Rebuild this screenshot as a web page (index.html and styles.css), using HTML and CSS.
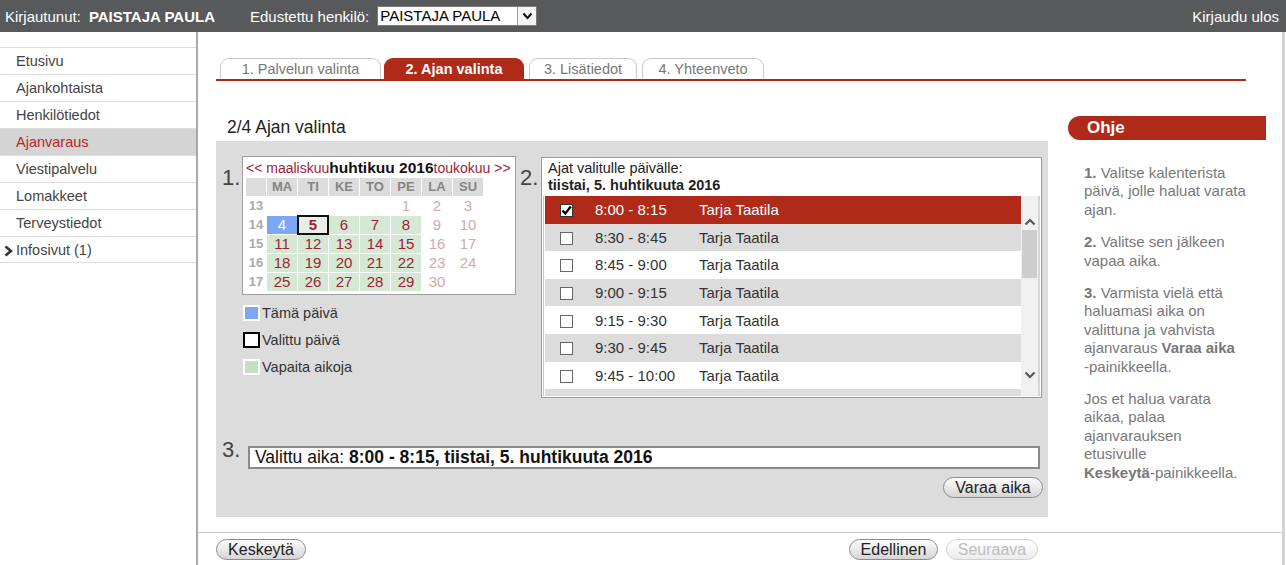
FILE: index.html
```html
<!DOCTYPE html>
<html lang="fi">
<head>
<meta charset="utf-8">
<title>Ajanvaraus</title>
<link rel="stylesheet" href="styles.css">
</head>
<body>
<header class="topbar">
  <span class="lbl">Kirjautunut:</span><b class="uname">PAISTAJA PAULA</b>
  <span class="rep">Edustettu henkilö:</span>
  <div class="select"><span class="sel-val">PAISTAJA PAULA</span><span class="sel-btn"><svg width="11" height="8" viewBox="0 0 11 8"><path d="M1.5 1.5 L5.5 6 L9.5 1.5" fill="none" stroke="#111" stroke-width="2"/></svg></span></div>
  <span class="logout">Kirjaudu ulos</span>
</header>
<div class="layout">
  <nav class="sidebar">
    <ul class="menu">
      <li>Etusivu</li>
      <li>Ajankohtaista</li>
      <li>Henkilötiedot</li>
      <li class="active">Ajanvaraus</li>
      <li>Viestipalvelu</li>
      <li>Lomakkeet</li>
      <li>Terveystiedot</li>
      <li class="sub"><svg class="chev" width="9" height="12" viewBox="0 0 9 12"><path d="M1.5 1.5 L7 6 L1.5 10.5" fill="none" stroke="#333" stroke-width="2.6"/></svg>Infosivut (1)</li>
    </ul>
  </nav>
  <main class="main">
    <div class="tabs">
      <div class="tab t1">1. Palvelun valinta</div>
      <div class="tab t2 active">2. Ajan valinta</div>
      <div class="tab t3">3. Lisätiedot</div>
      <div class="tab t4">4. Yhteenveto</div>
    </div>
    <div class="content">
      <section class="wizard">
        <h1 class="title">2/4 Ajan valinta</h1>
        <div class="panel">
          <div class="steps">
            <div class="step">
              <span class="num">1.</span>
              <div class="calcol">
                <div class="cal">
                  <div class="cal-head"><span class="mlink">&lt;&lt; maaliskuu</span><b class="month">huhtikuu 2016</b><span class="mlink">toukokuu &gt;&gt;</span></div>
                  <div class="cal-grid">
                    <div class="dh"></div><div class="dh">MA</div><div class="dh">TI</div><div class="dh">KE</div><div class="dh">TO</div><div class="dh">PE</div><div class="dh">LA</div><div class="dh">SU</div>
                    <div class="wk">13</div><div class="d"></div><div class="d"></div><div class="d"></div><div class="d"></div><div class="d off">1</div><div class="d off">2</div><div class="d off">3</div>
                    <div class="wk">14</div><div class="d today">4</div><div class="d free sel">5</div><div class="d free">6</div><div class="d free">7</div><div class="d free">8</div><div class="d off">9</div><div class="d off">10</div>
                    <div class="wk">15</div><div class="d free">11</div><div class="d free">12</div><div class="d free">13</div><div class="d free">14</div><div class="d free">15</div><div class="d off">16</div><div class="d off">17</div>
                    <div class="wk">16</div><div class="d free">18</div><div class="d free">19</div><div class="d free">20</div><div class="d free">21</div><div class="d free">22</div><div class="d off">23</div><div class="d off">24</div>
                    <div class="wk">17</div><div class="d free">25</div><div class="d free">26</div><div class="d free">27</div><div class="d free">28</div><div class="d free">29</div><div class="d off">30</div><div class="d"></div>
                  </div>
                </div>
                <ul class="legend">
                  <li><span class="sw sw-today"></span>Tämä päivä</li>
                  <li><span class="sw sw-sel"></span>Valittu päivä</li>
                  <li><span class="sw sw-free"></span>Vapaita aikoja</li>
                </ul>
              </div>
            </div>
            <div class="step">
              <span class="num">2.</span>
              <div class="times">
                <div class="times-head">Ajat valitulle päivälle:<br><b>tiistai, 5. huhtikuuta 2016</b></div>
                <div class="times-list">
                  <div class="rows">
                    <div class="row selected"><span class="cb checked"><svg width="11" height="11" viewBox="0 0 11 11"><path d="M1.5 5.5 L4.3 8.5 L9.8 1.5" fill="none" stroke="#000" stroke-width="2.2"/></svg></span><span class="time">8:00 - 8:15</span><span class="who">Tarja Taatila</span></div>
                    <div class="row alt"><span class="cb"></span><span class="time">8:30 - 8:45</span><span class="who">Tarja Taatila</span></div>
                    <div class="row"><span class="cb"></span><span class="time">8:45 - 9:00</span><span class="who">Tarja Taatila</span></div>
                    <div class="row alt"><span class="cb"></span><span class="time">9:00 - 9:15</span><span class="who">Tarja Taatila</span></div>
                    <div class="row"><span class="cb"></span><span class="time">9:15 - 9:30</span><span class="who">Tarja Taatila</span></div>
                    <div class="row alt"><span class="cb"></span><span class="time">9:30 - 9:45</span><span class="who">Tarja Taatila</span></div>
                    <div class="row"><span class="cb"></span><span class="time">9:45 - 10:00</span><span class="who">Tarja Taatila</span></div>
                    <div class="row alt"></div>
                  </div>
                  <div class="scrollbar">
                    <span class="sb-up"><svg width="12" height="8" viewBox="0 0 12 8"><path d="M1.5 6.5 L6 2 L10.5 6.5" fill="none" stroke="#555" stroke-width="2.2"/></svg></span>
                    <span class="sb-thumb"></span>
                    <span class="sb-down"><svg width="12" height="8" viewBox="0 0 12 8"><path d="M1.5 1.5 L6 6 L10.5 1.5" fill="none" stroke="#555" stroke-width="2.2"/></svg></span>
                  </div>
                </div>
              </div>
            </div>
          </div>
          <div class="step3">
            <span class="num">3.</span>
            <div class="chosen">Valittu aika: <b>8:00 - 8:15, tiistai, 5. huhtikuuta 2016</b></div>
          </div>
          <div class="actions"><button class="btn btn-book">Varaa aika</button></div>
        </div>
      </section>
      <aside class="help">
        <div class="help-head">Ohje</div>
        <div class="help-body">
          <p><b>1.</b> Valitse kalenterista<br>päivä, jolle haluat varata<br>ajan.</p>
          <p><b>2.</b> Valitse sen jälkeen<br>vapaa aika.</p>
          <p><b>3.</b> Varmista vielä että<br>haluamasi aika on<br>valittuna ja vahvista<br>ajanvaraus <b>Varaa aika</b><br>-painikkeella.</p>
          <p>Jos et halua varata<br>aikaa, palaa<br>ajanvarauksen<br>etusivulle<br><b>Keskeytä</b>-painikkeella.</p>
        </div>
      </aside>
    </div>
    <div class="footer">
      <button class="btn btn-cancel">Keskeytä</button>
      <button class="btn btn-prev">Edellinen</button>
      <button class="btn btn-next" disabled>Seuraava</button>
    </div>
  </main>
</div>
</body>
</html>
```
FILE: styles.css
```css
* { box-sizing: border-box; }
html, body { margin: 0; padding: 0; }
body {
  width: 1286px;
  height: 565px;
  overflow: hidden;
  font-family: "Liberation Sans", Arial, sans-serif;
  font-size: 14.5px;
  color: #333;
  background: #fff;
}

/* top bar */
.topbar {
  height: 32px;
  background: #58595b;
  color: #fff;
  font-size: 15px;
  display: flex;
  align-items: center;
  padding: 0 7px 0 5px;
}
.uname { margin-left: 8px; }
.rep { margin-left: 35px; }
.select {
  margin-left: 8px;
  width: 160px;
  height: 20px;
  background: #fff;
  border: 1px solid #7a7a7a;
  color: #000;
  display: flex;
  align-items: center;
  padding-left: 2px;
}
.sel-val { flex: 1; line-height: 18px; }
.sel-btn {
  width: 19px;
  height: 18px;
  border-left: 1px solid #a0a0a0;
  background: #f4f4f4;
  display: flex;
  align-items: center;
  justify-content: center;
}
.logout { margin-left: auto; }

/* layout */
.layout { display: flex; height: 533px; }
.sidebar {
  flex: 0 0 198px;
  border-right: 2px solid #a9a9a9;
  padding-top: 15px;
}
.menu { list-style: none; margin: 0; padding: 0; }
.menu li {
  height: 27px;
  line-height: 26px;
  border-top: 1px solid #dcdcdc;
  padding-left: 16px;
  color: #444;
  position: relative;
}
.menu li:last-child { border-bottom: 1px solid #dcdcdc; }
.menu li.active { background: #d4d4d4; color: #b9262a; }
.menu li .chev { position: absolute; left: 4px; top: 8px; }

.main {
  flex: 0 0 1087px;
  border-right: 3px solid #d3d3d3;
  display: flex;
  flex-direction: column;
}

/* tabs */
.tabs {
  margin: 26px 0 0 18px;
  width: 1030px;
  border-bottom: 2px solid #b02a19;
  display: flex;
  padding-left: 4px;
}
.tab {
  height: 21px;
  border: 1px solid #c9c9c9;
  border-bottom: none;
  border-radius: 9px 9px 0 0;
  color: #777;
  text-align: center;
  line-height: 20px;
  font-size: 14.5px;
  white-space: nowrap;
}
.t1 { width: 161px; }
.t2 { width: 140px; margin-left: 3px; }
.t3 { width: 108px; margin-left: 5px; }
.t4 { width: 122px; margin-left: 5px; }
.tab.active { background: #b02a19; border-color: #b02a19; color: #fff; font-weight: bold; }

/* content */
.content { display: flex; margin: 35px 0 0 18px; }
.wizard { width: 832px; }
.title {
  margin: 0;
  height: 25px;
  padding-left: 11px;
  font-size: 17.5px;
  font-weight: normal;
  line-height: 22px;
  color: #222;
}
.panel {
  height: 376px;
  background: #dcdcdc;
  padding: 15px 0 0 6px;
}
.steps { display: flex; align-items: flex-start; height: 242px; }
.step { display: flex; align-items: flex-start; }
.num {
  font-size: 22px;
  line-height: 22px;
  color: #444;
  padding-top: 11px;
}
.step:first-child .num { width: 20px; }
.step:last-child { margin-left: 4px; }
.step:last-child .num { width: 21px; }

/* calendar */
.cal {
  width: 274px;
  height: 139px;
  background: #fff;
  border: 1px solid #a0a0a0;
  padding: 2px 3px 3px 3px;
}
.cal-head { display: flex; height: 18px; line-height: 18px; white-space: nowrap; }
.mlink { color: #9e1b3c; font-size: 14px; }
.month { color: #111; font-size: 15.5px; }
.cal-grid {
  margin-top: 1px;
  display: grid;
  grid-template-columns: 20px repeat(7, 30px);
  grid-auto-rows: 18px;
  gap: 1px;
}
.dh {
  background: #dcdcdc;
  color: #858585;
  font-weight: bold;
  font-size: 13px;
  text-align: center;
  line-height: 18px;
}
.wk {
  color: #a9a9a9;
  font-weight: bold;
  font-size: 13px;
  text-align: center;
  line-height: 18px;
}
.d {
  text-align: center;
  line-height: 18px;
  font-size: 15px;
  color: #a11d38;
}
.d.off { color: #d5a9a9; }
.d.free { background: #d5e8d3; }
.d.today { background: #7ba7f3; color: #fff; }
.d.sel { outline: 2px solid #111; outline-offset: -1px; font-weight: bold; background: #e8efe6; }

.legend { list-style: none; margin: 10px 0 0 1px; padding: 0; }
.legend li { display: flex; align-items: center; height: 16px; margin-bottom: 11px; color: #333; }
.sw { width: 17px; height: 16px; border: 2px solid #fff; margin-right: 2px; }
.sw-today { background: #7ba7f3; }
.sw-sel { background: #fff; border-color: #000; }
.sw-free { background: #c4dfc4; }

/* times */
.times {
  margin-top: 1px;
  width: 501px;
  height: 241px;
  background: #fff;
  border: 1px solid #9d9d9d;
  display: flex;
  flex-direction: column;
}
.times-head {
  padding: 2px 6px 0;
  height: 38px;
  line-height: 17px;
  font-size: 14.5px;
  color: #222;
}
.times-list {
  flex: 1;
  display: flex;
  margin: 0 1px 1px 1px;
  border-left: 1px solid #c8c8c8;
  overflow: hidden;
}
.rows { flex: 1; overflow: hidden; padding-left: 1px; }
.row {
  height: 27.6px;
  display: flex;
  align-items: center;
  padding-left: 15px;
  font-size: 15px;
  color: #333;
  background: #fff;
}
.row.alt { background: #dcdcdc; }
.row.selected { background: #b02a19; color: #fff; }
.cb {
  width: 13px;
  height: 13px;
  border: 1px solid #666;
  background: #fff;
  margin-top: 2px;
  display: flex;
  align-items: center;
  justify-content: center;
}
.cb.checked { border-color: #333; }
.time { margin-left: 22px; width: 104px; }
.scrollbar {
  flex: 0 0 19px;
  background: #f0f0f0;
  border-right: 2px solid #d6d6d6;
  display: flex;
  flex-direction: column;
  align-items: center;
}
.sb-up { height: 34px; display: flex; align-items: flex-end; padding-bottom: 4px; }
.sb-thumb { width: 15px; height: 48px; background: #cdcdcd; }
.sb-down { margin-top: 88px; }

/* step 3 */
.step3 { display: flex; align-items: flex-start; margin-top: 41px; }
.step3 .num { width: 26px; padding-top: 0; }
.chosen {
  margin-top: 7px;
  width: 792px;
  height: 23px;
  border: 2px solid #8a8a8a;
  background: #fff;
  padding-left: 5px;
  font-size: 17.5px;
  line-height: 19px;
  color: #111;
  white-space: nowrap;
}
.actions { display: flex; justify-content: flex-end; padding-right: 5px; margin-top: 8px; }

/* buttons */
.btn {
  height: 21px;
  border: 1px solid #8c8c8c;
  border-radius: 11px;
  background: linear-gradient(#fdfdfd, #d5d5d5);
  font-family: "Liberation Sans", Arial, sans-serif;
  font-size: 16px;
  line-height: 19px;
  color: #222;
  padding: 0;
  text-align: center;
}
.btn-book { width: 100px; }
.btn-cancel { width: 90px; }
.btn-prev { width: 89px; margin-left: auto; }
.btn-next { width: 92px; margin-left: 8px; color: #bdbdbd; border-color: #d2d2d2; background: linear-gradient(#fff, #ececec); }

/* help */
.help { width: 198px; margin-left: 20px; }
.help-head {
  height: 24px;
  background: #b02a19;
  border-radius: 12px 0 0 12px;
  color: #fff;
  font-weight: bold;
  font-size: 17px;
  line-height: 24px;
  padding-left: 19px;
}
.help-body {
  margin-top: 24px;
  padding-left: 16px;
  font-size: 15px;
  line-height: 18.4px;
  color: #787878;
  white-space: nowrap;
}
.help-body p { margin: 0 0 14px; }

/* footer */
.footer {
  margin-top: 15px;
  border-top: 1px solid #c8c8c8;
  padding: 6px 244px 0 18px;
  display: flex;
}
```
